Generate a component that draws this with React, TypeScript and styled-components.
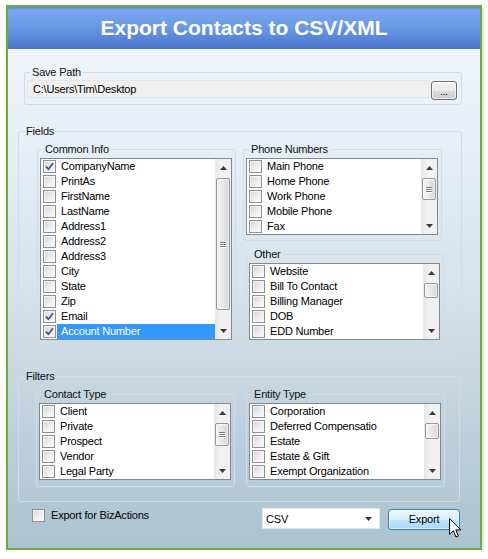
import React from 'react'
import styled, { createGlobalStyle } from 'styled-components'

const GlobalStyle = createGlobalStyle`
  body {
    margin: 0;
    background: #fff;
    font-family: 'Liberation Sans', Arial, sans-serif;
  }
`

const Window = styled.div`
  margin: 5px 0 0 6px;
  width: 476px;
  height: 545px;
  box-sizing: border-box;
  border: 2px solid #6cab3c;
  box-shadow: 1px 2px 3px rgba(0, 0, 0, 0.18);
  display: flex;
  flex-direction: column;
  font-size: 11px;
  letter-spacing: -0.2px;
  color: #000;
`

const TitleBar = styled.header`
  flex: none;
  height: 42px;
  display: flex;
  align-items: center;
  justify-content: center;
  background: linear-gradient(
    180deg,
    #5d88d4 0,
    #78a6ee 8%,
    #6b9ae6 45%,
    #4974cb 100%
  );
  color: #fff;
  font-size: 21px;
  font-weight: bold;
  letter-spacing: 0;
`

const Body = styled.main`
  flex: 1;
  background: linear-gradient(180deg, #f1f5fb 0, #d9e4ed 45%, #abc2d0 100%);
  padding: 17px 18px 0 10px;
  display: flex;
  flex-direction: column;
`

const Group = styled.fieldset<{ $ml?: number; $mr?: number; $mt?: number }>`
  margin: ${(p) => p.$mt ?? 0}px ${(p) => p.$mr ?? 0}px 0
    ${(p) => p.$ml ?? 0}px;
  padding: 0;
  min-width: 0;
  border: 1px solid #d1dce4;
  border-radius: 3px;
`

const Legend = styled.legend`
  margin-left: 5px;
  padding: 0 2px;
  font-size: 11px;
  line-height: 13px;
  color: #111;
`

const PathRow = styled.div`
  display: flex;
  align-items: flex-start;
  gap: 2px;
  padding: 1px 4px 4px 2px;
`

const PathField = styled.div`
  flex: 1;
  height: 18px;
  box-sizing: border-box;
  border: 1px solid #e4e6e8;
  background: #f0f0f0;
  padding-left: 5px;
  line-height: 16px;
`

const BrowseButton = styled.div`
  width: 26px;
  height: 19px;
  margin-top: 1px;
  box-sizing: border-box;
  border: 1px solid #707070;
  border-radius: 3px;
  background: linear-gradient(180deg, #f2f2f2 0, #ebebeb 50%, #dddddd 51%, #cfcfcf 100%);
  box-shadow: inset 0 0 0 1px rgba(255, 255, 255, 0.7);
  text-align: center;
  line-height: 19px;
  font-size: 10px;
`

const Columns = styled.div<{ $gap: number; $pad: string }>`
  display: grid;
  grid-template-columns: 1fr 1fr;
  column-gap: ${(p) => p.$gap}px;
  padding: ${(p) => p.$pad};
`

const Stack = styled.div`
  display: flex;
  flex-direction: column;
  gap: 7px;
`

const ListWrap = styled.div<{ $pb: number }>`
  padding: 2px 3px ${(p) => p.$pb}px 2px;
`

const ListBox = styled.div`
  display: flex;
  border: 1px solid #828790;
  background: #fff;
`

const Items = styled.div`
  flex: 1;
  min-width: 0;
`

const Row = styled.div`
  display: flex;
  align-items: center;
  height: 15px;
`

const Check = styled.span`
  flex: none;
  width: 13px;
  height: 13px;
  margin-left: 2px;
  box-sizing: border-box;
  border: 1px solid #8e8f8f;
  background: linear-gradient(135deg, #d6d6d6 0, #f0f0f0 60%, #fafafa 100%);
  box-shadow: inset 0 0 0 1px #f6f6f6;
  display: flex;
  align-items: center;
  justify-content: center;
`

const ItemLabel = styled.span<{ $selected?: boolean }>`
  flex: 1;
  margin-left: 1px;
  padding-left: 4px;
  height: 15px;
  line-height: 15px;
  white-space: nowrap;
  overflow: hidden;
  background: ${(p) => (p.$selected ? '#3399ff' : 'transparent')};
  color: ${(p) => (p.$selected ? '#fff' : '#000')};
`

const ScrollBar = styled.div`
  flex: none;
  width: 16px;
  display: flex;
  flex-direction: column;
  background: linear-gradient(90deg, #e6e6e6 0, #f2f2f2 40%, #f0f0f0 100%);
`

const ArrowButton = styled.div`
  flex: none;
  height: 17px;
  display: flex;
  align-items: center;
  justify-content: center;
`

const Track = styled.div`
  flex: 1;
  padding: 2px 1px 0;
`

const Thumb = styled.div<{ $h: number }>`
  height: ${(p) => p.$h}px;
  box-sizing: border-box;
  border: 1px solid #979797;
  border-radius: 2px;
  background: linear-gradient(90deg, #f4f4f4 0, #e8e8e8 50%, #d6d6d6 100%);
  box-shadow: inset 0 0 0 1px rgba(255, 255, 255, 0.6);
  display: flex;
  flex-direction: column;
  align-items: center;
  justify-content: center;
  gap: 1px;
`

const GripLine = styled.span`
  width: 6px;
  height: 1px;
  background: #7d7d7d;
  box-shadow: 0 1px 0 #fff;
`

const BottomRow = styled.div`
  display: flex;
  align-items: flex-start;
  margin: 6px 2px 0 12px;
`

const OptionLabel = styled.label`
  display: flex;
  align-items: center;
  gap: 6px;
  margin-top: 1px;
  flex: 1;
  line-height: 13px;
`

const Dropdown = styled.div`
  width: 118px;
  height: 21px;
  box-sizing: border-box;
  border: 1px solid #e2e7ec;
  background: #fff;
  display: flex;
  align-items: center;
  justify-content: space-between;
  padding: 0 7px 0 3px;
`

const ExportButton = styled.div`
  position: relative;
  width: 72px;
  height: 21px;
  margin: 1px 0 0 8px;
  box-sizing: border-box;
  border: 1px solid #3c7fb1;
  border-radius: 3px;
  background: linear-gradient(180deg, #eaf6fd 0, #d9f0fc 50%, #bee6fd 51%, #a7d9f5 100%);
  box-shadow: inset 0 0 0 1px rgba(255, 255, 255, 0.6);
  text-align: center;
  line-height: 19px;
`

const Cursor = styled.svg`
  position: absolute;
  left: 60px;
  top: 8px;
`

const CheckMark = () => (
  <svg width='9' height='9' viewBox='0 0 9 9'>
    <path d='M1 4.6 L3.4 7.2 L8 1.2' fill='none' stroke='#3b4f8c' strokeWidth='1.7' />
  </svg>
)

const Arrow = ({ down }: { down?: boolean }) => (
  <svg width='7' height='4' viewBox='0 0 7 4'>
    <path d={down ? 'M0 0 H7 L3.5 4 Z' : 'M0 4 H7 L3.5 0 Z'} fill='#3a3a3a' />
  </svg>
)

type Item = { label: string; checked?: boolean; selected?: boolean }

const CheckList = ({ items, thumb }: { items: Item[]; thumb: number }) => (
  <ListBox>
    <Items>
      {items.map((it) => (
        <Row key={it.label}>
          <Check>{it.checked && <CheckMark />}</Check>
          <ItemLabel $selected={it.selected}>{it.label}</ItemLabel>
        </Row>
      ))}
    </Items>
    <ScrollBar>
      <ArrowButton>
        <Arrow />
      </ArrowButton>
      <Track>
        <Thumb $h={thumb}>
          {thumb > 20 && (
            <>
              <GripLine />
              <GripLine />
              <GripLine />
            </>
          )}
        </Thumb>
      </Track>
      <ArrowButton>
        <Arrow down />
      </ArrowButton>
    </ScrollBar>
  </ListBox>
)

const commonInfo: Item[] = [
  { label: 'CompanyName', checked: true },
  { label: 'PrintAs' },
  { label: 'FirstName' },
  { label: 'LastName' },
  { label: 'Address1' },
  { label: 'Address2' },
  { label: 'Address3' },
  { label: 'City' },
  { label: 'State' },
  { label: 'Zip' },
  { label: 'Email', checked: true },
  { label: 'Account Number', checked: true, selected: true },
]

const phoneNumbers: Item[] = [
  { label: 'Main Phone' },
  { label: 'Home Phone' },
  { label: 'Work Phone' },
  { label: 'Mobile Phone' },
  { label: 'Fax' },
]

const other: Item[] = [
  { label: 'Website' },
  { label: 'Bill To Contact' },
  { label: 'Billing Manager' },
  { label: 'DOB' },
  { label: 'EDD Number' },
]

const contactTypes: Item[] = [
  { label: 'Client' },
  { label: 'Private' },
  { label: 'Prospect' },
  { label: 'Vendor' },
  { label: 'Legal Party' },
]

const entityTypes: Item[] = [
  { label: 'Corporation' },
  { label: 'Deferred Compensatio' },
  { label: 'Estate' },
  { label: 'Estate & Gift' },
  { label: 'Exempt Organization' },
]

const App: React.FC = () => {
  return (
    <>
      <GlobalStyle />
      <Window>
        <TitleBar>Export Contacts to CSV/XML</TitleBar>
        <Body>
          <Group $ml={6}>
            <Legend>Save Path</Legend>
            <PathRow>
              <PathField>C:\Users\Tim\Desktop</PathField>
              <BrowseButton>...</BrowseButton>
            </PathRow>
          </Group>

          <Group $mt={20}>
            <Legend>Fields</Legend>
            <Columns $gap={7} $pad='5px 19px 8px 18px'>
              <Group>
                <Legend>Common Info</Legend>
                <ListWrap $pb={8}>
                  <CheckList items={commonInfo} thumb={132} />
                </ListWrap>
              </Group>
              <Stack>
                <Group>
                  <Legend>Phone Numbers</Legend>
                  <ListWrap $pb={5}>
                    <CheckList items={phoneNumbers} thumb={22} />
                  </ListWrap>
                </Group>
                <Group $ml={3} $mr={-2}>
                  <Legend>Other</Legend>
                  <ListWrap $pb={5}>
                    <CheckList items={other} thumb={15} />
                  </ListWrap>
                </Group>
              </Stack>
            </Columns>
          </Group>

          <Group $mt={12} $mr={2}>
            <Legend>Filters</Legend>
            <Columns $gap={11} $pad='5px 14px 14px 17px'>
              <Group>
                <Legend>Contact Type</Legend>
                <ListWrap $pb={6}>
                  <CheckList items={contactTypes} thumb={23} />
                </ListWrap>
              </Group>
              <Group>
                <Legend>Entity Type</Legend>
                <ListWrap $pb={6}>
                  <CheckList items={entityTypes} thumb={16} />
                </ListWrap>
              </Group>
            </Columns>
          </Group>

          <BottomRow>
            <OptionLabel>
              <Check />
              Export for BizActions
            </OptionLabel>
            <Dropdown>
              CSV
              <Arrow down />
            </Dropdown>
            <ExportButton>
              Export
              <Cursor width='13' height='20' viewBox='0 0 13 20'>
                <path
                  d='M0.5 0.5 L0.5 16.5 L4.3 12.8 L7 19 L9.4 18 L6.8 11.9 L12 11.9 Z'
                  fill='#fff'
                  stroke='#000'
                  strokeWidth='1'
                  strokeLinejoin='round'
                />
              </Cursor>
            </ExportButton>
          </BottomRow>
        </Body>
      </Window>
    </>
  )
}

export default App
